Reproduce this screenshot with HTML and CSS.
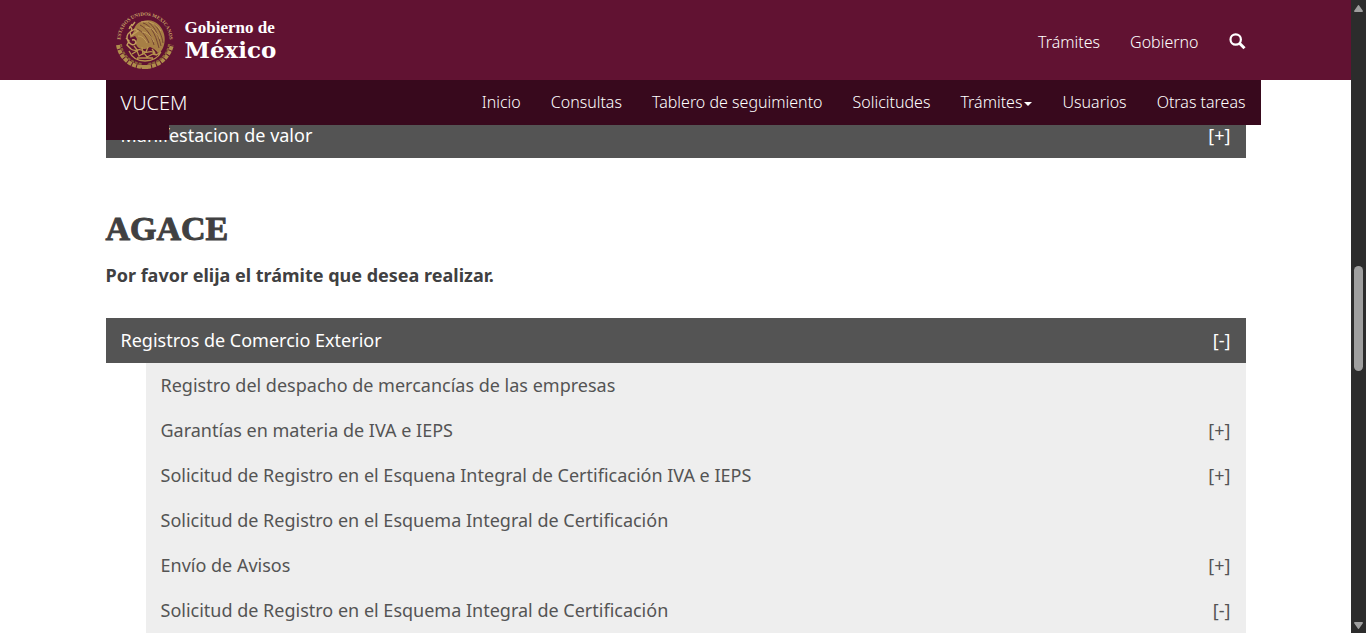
FILE: index.html
```html
<!DOCTYPE html>
<html lang="es">
<head>
<meta charset="utf-8">
<meta name="viewport" content="width=device-width, initial-scale=1">
<title>VUCEM - Trámites</title>
<link rel="stylesheet" href="styles.css">
</head>
<body>
<div class="page">
  <header class="gov-header">
    <div class="container gov-bar">
      <a class="gov-logo" href="#">
        <svg class="seal" viewBox="0 0 60 60" aria-hidden="true">
          <path id="legend" d="M7.600 40 A24.500 24.500 0 1 1 52.400 40" fill="none"/>
          <text class="seal-text"><textPath href="#legend" startOffset="50%" text-anchor="middle">ESTADOS UNIDOS MEXICANOS</textPath></text>
          <path d="M3 35C5 47 15 57 29 57C44 57 54 47 57 35" fill="none" stroke="#b08d4c" stroke-width="4" stroke-dasharray="4 1"/>
          <path d="M6 34C7 44 15 53 27 54M54 34C53 44 45 53 33 54" fill="none" stroke="#8a6238" stroke-width="2" stroke-dasharray="3 1"/>
          <path d="M25 55h10l-2 4h-6z" fill="#b08d4c"/>
          <path d="M19 21c0-5 4-9 9-10c6-2 12 0 16 4c5 5 7 13 5 20c-1 4-3 7-6 8c-2-3-5-5-8-6c-3 2-8 3-11 1c-3-2-4-5-2-9l-2-3-5 2z" fill="#a77f45"/>
          <path d="M28 13c7 2 12 9 16 25M33 12c6 4 10 11 13 24M39 14c5 5 8 12 9 19M25 15c6 3 11 9 14 20M22 19c5 2 9 7 12 14" fill="none" stroke="#6d3c30" stroke-width=".9"/>
          <path d="M26 12c7-2 16 2 20 9M30 17c6 0 12 5 15 12M27 22c5 0 9 4 12 10M23 26c4 0 7 3 9 7" fill="none" stroke="#cda968" stroke-width=".7"/>
          <path d="M15 22l5-3 3 2-3 2-4 3zM14 17c3 0 4 3 1 5s-4 6-2 9 5 5 7 3 0-5-3-4M20 12l-3 4M17 14l-3 5M11 28l3 3-2 4 4 4" fill="none" stroke="#c39e5e" stroke-width="1.400"/>
          <path d="M16 39c5 4 8-2 12 2s8-2 11 2 5-1 7-1M17 44l5-3 2 5 5-3 3 4 6-3 4 1M14 41c3 7 9 10 16 10s13-3 16-9M22 48h16M19 36l4 5M33 37l-2 5M37 39l3 4M27 37l1 8" fill="none" stroke="#b8934f" stroke-width="1.300"/>
        </svg>
        <span class="gov-name"><span class="gov-small">Gobierno de</span><span class="gov-large">México</span></span>
      </a>
      <nav class="gov-links" aria-label="Gobierno">
        <a href="#">Trámites</a>
        <a href="#">Gobierno</a>
        <a class="search" href="#" aria-label="Buscar"><svg viewBox="0 0 17 17" aria-hidden="true"><circle cx="6.700" cy="6.500" r="5.200" fill="none" stroke="#fff" stroke-width="2.200"/><path d="M10.500 10.300l5 5" stroke="#fff" stroke-width="3"/></svg></a>
      </nav>
    </div>
  </header>
  <div class="container">
    <nav class="subnav" aria-label="VUCEM">
      <a class="brand" href="#">VUCEM</a>
      <div class="subnav-links">
        <a href="#">Inicio</a>
        <a href="#">Consultas</a>
        <a href="#">Tablero de seguimiento</a>
        <a href="#">Solicitudes</a>
        <a class="dropdown" href="#">Trámites</a>
        <a href="#">Usuarios</a>
        <a href="#">Otras tareas</a>
      </div>
    </nav>
  </div>
  <main class="container">
    <button class="row section scrolled" type="button"><span>Manifestacion de valor</span><span>[+]</span></button>
    <h2>AGACE</h2>
    <p class="hint">Por favor elija el trámite que desea realizar.</p>
    <button class="row section" type="button" aria-expanded="true"><span>Registros de Comercio Exterior</span><span>[-]</span></button>
    <div class="sublist">
      <a class="row" href="#">Registro del despacho de mercancías de las empresas</a>
      <button class="row" type="button"><span>Garantías en materia de IVA e IEPS</span><span>[+]</span></button>
      <button class="row" type="button"><span>Solicitud de Registro en el Esquena Integral de Certificación IVA e IEPS</span><span>[+]</span></button>
      <a class="row" href="#">Solicitud de Registro en el Esquema Integral de Certificación</a>
      <button class="row" type="button"><span>Envío de Avisos</span><span>[+]</span></button>
      <button class="row" type="button"><span>Solicitud de Registro en el Esquema Integral de Certificación</span><span>[-]</span></button>
    </div>
  </main>
</div>
<div class="scrollbar" aria-hidden="true">
  <svg viewBox="0 0 9 7"><path d="M4.500 0Q5 0 5.500 1L9 6Q9 7 8 7H1Q0 7 0 6L3.500 1Q4 0 4.500 0Z"/></svg>
  <div class="track"><div class="thumb"></div></div>
  <svg viewBox="0 0 9 7"><path d="M4.500 7Q5 7 5.500 6L9 1Q9 0 8 0H1Q0 0 0 1L3.500 6Q4 7 4.500 7Z"/></svg>
</div>
</body>
</html>
```
FILE: styles.css
```css
* { box-sizing: border-box; }

body {
  display: flex;
  height: 100vh;
  margin: 0;
  overflow: hidden;
  background: #fff;
  color: #404041;
  font: 400 18px/25px "Noto Sans", "Open Sans", sans-serif;
}

a { color: inherit; text-decoration: none; }

.page { flex: 1; min-width: 0; }

.container {
  width: 100%;
  max-width: 1170px;
  margin: 0 auto;
  padding: 0 15px;
}

.gov-header { background: #611232; }

.gov-bar {
  display: flex;
  align-items: center;
  justify-content: space-between;
  height: 80px;
}

.gov-logo {
  display: flex;
  align-items: center;
  gap: 10px;
  padding-left: 9px;
  color: #fff;
}

.seal { width: 60px; height: 60px; overflow: visible; }

.seal-text {
  fill: #c9a566;
  font: bold 5px "Liberation Serif", serif;
}

.gov-name {
  display: flex;
  flex-direction: column;
}

.gov-small { font: 700 17px/20px "Liberation Serif", serif; }
.gov-large { font: 700 23px/24px "DejaVu Serif", serif; }

.gov-links {
  display: flex;
  align-items: center;
  gap: 30px;
  padding-top: 4px;
  color: #fff;
  font: 300 16px/22px "Noto Sans", "Open Sans", sans-serif;
}

.search { display: flex; padding-bottom: 2px; }
.search svg { width: 17px; height: 17px; }

.subnav {
  position: relative;
  z-index: 1;
  display: flex;
  align-items: center;
  justify-content: space-between;
  height: 45px;
  margin-right: -15px;
  padding: 0 15px;
  background: #38091d;
  color: #fff;
  font: 300 16px/22px "Noto Sans", "Open Sans", sans-serif;
}

.subnav::before {
  content: "";
  position: absolute;
  top: 0;
  left: 0;
  width: 63px;
  height: 60px;
  background: #38091d;
}

.brand { position: relative; font-size: 20px; }

.subnav-links { display: flex; gap: 30px; padding-bottom: 1px; }

.dropdown::after {
  content: "";
  display: inline-block;
  margin-left: 2px;
  vertical-align: middle;
  border-top: 4px solid #fff;
  border-right: 4px solid transparent;
  border-left: 4px solid transparent;
}

.row {
  display: flex;
  align-items: center;
  justify-content: space-between;
  width: 100%;
  min-height: 45px;
  padding: 10px 15px;
  border: 0;
  background: #eee;
  color: #545454;
  font: inherit;
  text-align: left;
}

.section {
  background: #545454;
  color: #fff;
}

.scrolled { margin-top: -12px; }

h2 {
  margin: 51px 0 0;
  font: 700 34px/40px "Liberation Serif", serif;
  -webkit-text-stroke: 1px #404041;
}

.hint { margin: 14px 0 30px; font-weight: 700; }

.sublist { margin-left: 40px; }

.scrollbar {
  display: flex;
  flex-direction: column;
  align-items: center;
  width: 15px;
  padding: 5px 0 4px;
  background: #2c2c2c;
}

.scrollbar svg { width: 9px; height: 7px; fill: #9f9f9f; }

.track { flex: 1; padding-top: 254px; }

.thumb {
  width: 9px;
  height: 105px;
  border-radius: 5px;
  background: #9f9f9f;
}
```
